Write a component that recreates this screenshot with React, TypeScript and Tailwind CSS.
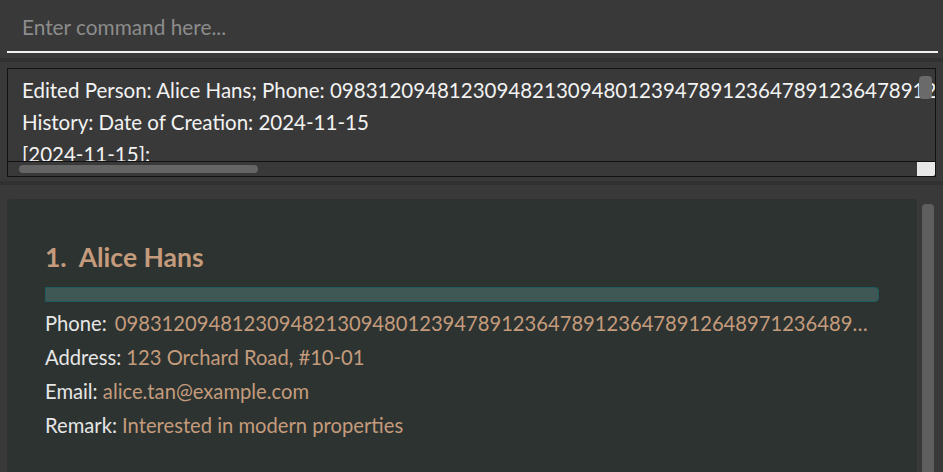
const phone =
  "09831209481230948213094801239478912364789123647891264897123648971236489712364897123648971236";

export default function App() {
  return (
    <div
      className="w-[943px] h-[472px] bg-[#393939] overflow-hidden flex flex-col"
      style={{ fontFamily: 'Lato, "Open Sans", sans-serif' }}
    >
      {/* command box */}
      <div className="h-[58px] pl-[7px] pr-[5px] pt-[12px] shrink-0">
        <div className="h-[41px] border-b-2 border-[#f2f2f2] pl-[15px] text-[20.8px] leading-[30px] text-[#8c8c8c]">
          Enter command here...
        </div>
      </div>
      <div className="h-[4px] bg-[#313131] shrink-0" />

      {/* result display */}
      <div className="h-[119px] px-[7px] pt-[6px] shrink-0">
        <div className="relative h-[109px] border border-[#121212] bg-[#393939] overflow-hidden">
          <div className="pl-[14px] pt-[5px] text-[20.5px] leading-[32px] text-[#f2f2f2] whitespace-nowrap">
            <div>Edited Person: Alice Hans; Phone: {phone}</div>
            <div>History: Date of Creation: 2024-11-15</div>
            <div>[2024-11-15]:</div>
          </div>
          {/* vertical scrollbar thumb */}
          <div className="absolute right-[3px] top-[7px] w-[13px] h-[23px] rounded-[4px] bg-[#6a6a6a]" />
          {/* horizontal scrollbar */}
          <div className="absolute left-0 right-0 bottom-0 h-[15px] bg-[#393939] border-t border-[#121212]">
            <div className="absolute left-[11px] top-[3px] w-[239px] h-[8px] rounded-full bg-[#656565]" />
            <div className="absolute right-0 top-0 w-[18px] h-[14px] bg-[#e8e8e8] rounded-br-[2px]" />
          </div>
        </div>
      </div>
      <div className="h-[4px] bg-[#313131] shrink-0" />

      {/* person list */}
      <div className="flex-1 flex pt-[14px] pl-[7px] min-h-0">
        <div className="w-[910px] bg-[#2d3331] rounded-t-[4px] pl-[38px] pr-[38px] pt-[42px]">
          <div className="text-[26.5px] leading-[32px] font-bold text-[#c49b7c]">
            1.&nbsp; Alice Hans
          </div>
          <div className="mt-[14px] h-[15px] bg-[#3f5856] border border-[#1d5c5c] rounded-r-[4px]" />
          <div className="mt-[4px] flex flex-col text-[20.2px] leading-[34px]">
            <div className="flex gap-[8px] pr-[8px] whitespace-nowrap">
              <span className="text-[#e6e6e6] shrink-0">Phone:</span>
              <span className="text-[#c49b7c] overflow-hidden text-ellipsis">{phone}</span>
            </div>
            <div className="whitespace-nowrap">
              <span className="text-[#e6e6e6]">Address: </span>
              <span className="text-[#c49b7c]">123 Orchard Road, #10-01</span>
            </div>
            <div className="whitespace-nowrap">
              <span className="text-[#e6e6e6]">Email: </span>
              <span className="text-[#c49b7c]">alice.tan@example.com</span>
            </div>
            <div className="whitespace-nowrap">
              <span className="text-[#e6e6e6]">Remark: </span>
              <span className="text-[#c49b7c]">Interested in modern properties</span>
            </div>
          </div>
        </div>
        <div className="w-[5px]" />
        <div className="w-[12px] mt-[5px] bg-[#5f5f5f] rounded-t-[4px]" />
      </div>
    </div>
  );
}
